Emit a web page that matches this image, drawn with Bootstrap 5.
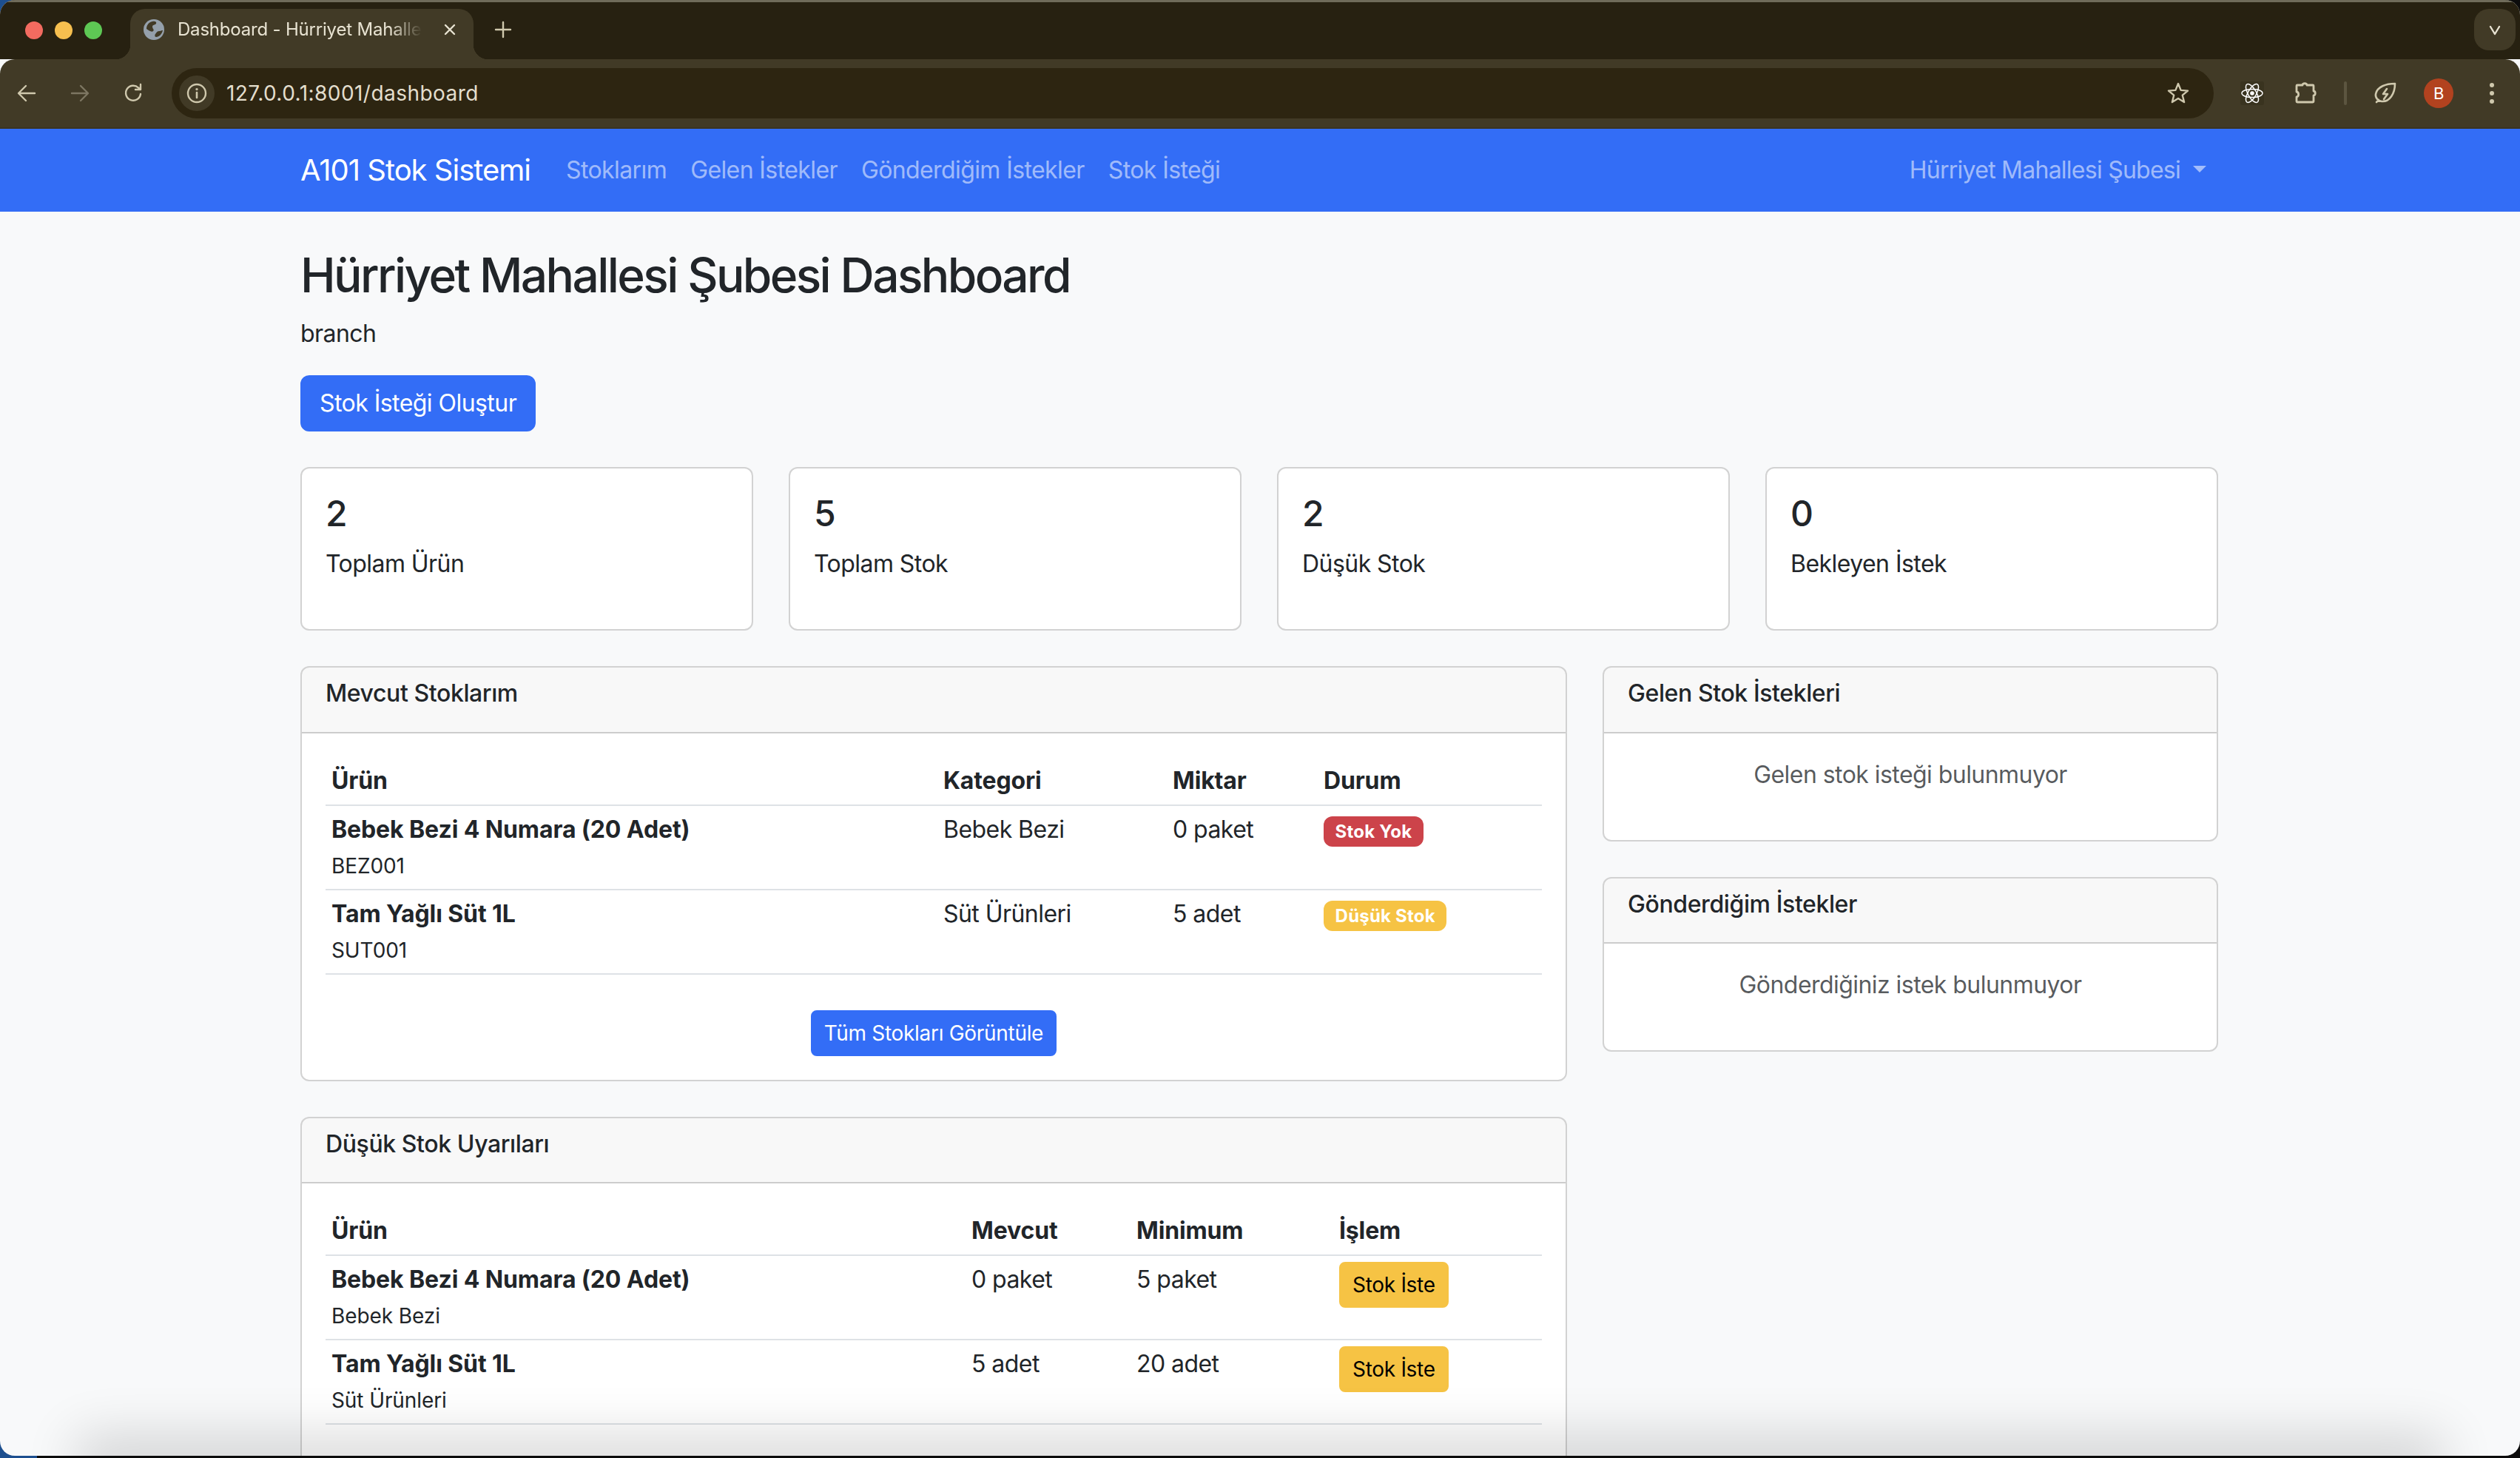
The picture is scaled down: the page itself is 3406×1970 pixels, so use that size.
<!DOCTYPE html>
<html lang="tr">
<head>
    <meta charset="UTF-8">
    <meta name="viewport" content="width=device-width, initial-scale=1.0">
    <title>Dashboard - Hürriyet Mahallesi Şubesi</title>
    <link href="https://cdn.jsdelivr.net/npm/bootstrap@5.3.0/dist/css/bootstrap.min.css" rel="stylesheet">
    <style>
        /* reference is a 2x capture, so everything rem-based is doubled */
        html { font-size: 32px; }
        :root {
            --bs-border-width: 2px;
            --bs-body-font-family: Inter, "Noto Sans", sans-serif;
            --bs-primary-rgb: 51, 109, 246;
            --bs-danger-rgb: 204, 67, 74;
            --bs-warning-rgb: 246, 195, 68;
        }
        body { height: 1970px; overflow: hidden; letter-spacing: -.55px; background: linear-gradient(90deg, #1d4f8f 0 50px, #0c0c0c 50px); }
        .container { max-width: 2640px; margin-left: 382px; }
        .btn-primary { --bs-btn-bg: #336df6; --bs-btn-border-color: #336df6; }
        .btn-warning { --bs-btn-bg: #f6c344; --bs-btn-border-color: #f6c344; }
        .btn-sm { letter-spacing: -.3px; }
        .app-window { position: relative; height: 1967px; overflow: hidden; border-radius: 20px; background: #f8f9fa; }
        .app-window::after { content: ""; position: absolute; left: 130px; right: 130px; bottom: -14px; height: 14px; box-shadow: 0 0 70px 26px rgba(0, 0, 0, .16); }

        /* browser frame */
        .tab-strip { height: 80px; background: #272111; border-top: 3px solid #6f6b5a; }
        .win-dots { gap: 16px; padding-left: 34px; margin-top: 26px; }
        .win-dot { width: 24px; height: 24px; border-radius: 50%; }
        .tab-item { position: relative; width: 464px; height: 68px; margin: 9px 0 0 38px; padding: 0 20px 12px 18px; background: #413a26; border-radius: 20px 20px 0 0; color: #e8e3d2; font-size: 24px; letter-spacing: -.2px; }
        .tab-item::before, .tab-item::after { content: ""; position: absolute; bottom: 0; width: 20px; height: 20px; }
        .tab-item::before { left: -20px; background: radial-gradient(circle at 0 0, transparent 20px, #413a26 20.5px); }
        .tab-item::after { right: -20px; background: radial-gradient(circle at 100% 0, transparent 20px, #413a26 20.5px); }
        .tab-title { width: 334px; margin: 0 24px 0 18px; white-space: nowrap; overflow: hidden; -webkit-mask-image: linear-gradient(90deg, #000 86%, transparent 99%); mask-image: linear-gradient(90deg, #000 86%, transparent 99%); }
        .tab-search { width: 56px; height: 56px; margin: 9px 6px 0 0; background: #413a26; border-radius: 20px; }
        .tool-bar { height: 94px; background: #413a26; border-radius: 20px 20px 0 0; border-bottom: 2px solid #3a3422; }
        .tool-slot { width: 72px; height: 72px; flex: none; }
        .omni-box { width: 2760px; height: 68px; margin: 0 16px; padding: 0 32px 0 10px; background: #2d2511; border-radius: 34px; color: #e3decd; font-size: 28px; letter-spacing: .45px; }
        .omni-info { width: 48px; height: 48px; margin-right: 16px; background: #413a26; border-radius: 50%; }
        .tool-sep { width: 4px; height: 32px; margin: 0 16px; background: #5c5540; border-radius: 2px; }
        .react-bg { width: 32px; height: 32px; background: #39331f; border-radius: 3px; }
        .user-dot { width: 40px; height: 40px; background: #b2421f; border-radius: 50%; color: #fff; font-size: 22px; }
        .chrome-ico { fill: none; stroke: #cfc8ad; stroke-width: 2.4; stroke-linecap: round; stroke-linejoin: round; }
        .chrome-ico.dim { stroke: #7d7662; }

        /* type tweaks, the capture was in a tighter system font */
        .navbar-brand { letter-spacing: -1px; }
        .navbar .nav-link { letter-spacing: -.6px; }
        .navbar .dropdown-toggle { letter-spacing: -.75px; }
        .navbar .dropdown-toggle::after { margin-left: 17px; }
        h2 { letter-spacing: -2.6px; }
        h6 { font-weight: 500; letter-spacing: -.4px; }
        th { letter-spacing: -.15px; }
        strong, small { letter-spacing: -.1px; }
        .badge { letter-spacing: .2px; }

        /* column widths read off the reference */
        .fixed-table { table-layout: fixed; }
        .stock-name { width: 827px; }
        .stock-cat { width: 310px; }
        .stock-qty { width: 204px; }
        .low-name { width: 865px; }
        .low-now { width: 223px; }
        .low-min { width: 274px; }
    </style>
</head>
<body>
    <div class="app-window">
        <!-- Browser frame -->
        <div class="tab-strip d-flex align-items-start">
            <div class="win-dots d-flex">
                <span class="win-dot" style="background:#f26b60"></span>
                <span class="win-dot" style="background:#f6bf4f"></span>
                <span class="win-dot" style="background:#5ec854"></span>
            </div>
            <div class="tab-item d-flex align-items-center">
                <svg width="28" height="28" viewBox="0 0 28 28">
                    <circle cx="14" cy="14" r="14" fill="#95a0ab"/>
                    <path d="M12 3c4-1 6 1 5 3s-5 1-5 4 3 4 1 6-6-1-9-3c0-5 3-9 8-10zM26 15c-1 5-5 9-9 9-2 0-2-3-1-4s2-4 5-4 3-1 5-1z" fill="#413a26"/>
                </svg>
                <span class="tab-title">Dashboard - Hürriyet Mahalle</span>
                <svg width="20" height="20" viewBox="0 0 20 20" class="chrome-ico"><path d="M4 4l12 12M16 4L4 16" style="stroke:#e8e3d2"/></svg>
            </div>
            <svg width="24" height="24" viewBox="0 0 24 24" class="chrome-ico" style="margin:25px 0 0 28px"><path d="M12 2v20M2 12h20"/></svg>
            <div class="tab-search ms-auto d-flex align-items-center justify-content-center">
                <svg width="20" height="20" viewBox="0 0 20 20" class="chrome-ico"><path d="M4 6l6 10 6-10" style="stroke:#e8e3d2"/></svg>
            </div>
        </div>
        <div class="tool-bar d-flex align-items-center">
            <div class="tool-slot d-flex align-items-center justify-content-center">
                <svg width="32" height="32" viewBox="0 0 32 32" class="chrome-ico"><path d="M27 16H6M15 6L5 16l10 10"/></svg>
            </div>
            <div class="tool-slot d-flex align-items-center justify-content-center">
                <svg width="32" height="32" viewBox="0 0 32 32" class="chrome-ico dim"><path d="M5 16h21M17 6l10 10-10 10"/></svg>
            </div>
            <div class="tool-slot d-flex align-items-center justify-content-center">
                <svg width="32" height="32" viewBox="0 0 32 32" class="chrome-ico"><path d="M26 17a10 10 0 1 1-3-8.500L26 11M26 4v7h-7"/></svg>
            </div>
            <div class="omni-box d-flex align-items-center">
                <span class="omni-info d-flex align-items-center justify-content-center">
                    <svg width="28" height="28" viewBox="0 0 28 28" class="chrome-ico"><circle cx="14" cy="14" r="12"/><path d="M14 13v7" stroke-width="2.6"/><circle cx="14" cy="8.6" r="1" style="stroke-width:1.4"/></svg>
                </span>
                <span>127.0.0.1:8001/dashboard</span>
                <svg width="32" height="32" viewBox="0 0 32 32" class="chrome-ico ms-auto"><path d="M16 3l3.600 8.900 9.400.7-7.200 6.100 2.300 9.300L16 23l-8.100 5 2.300-9.300L3 12.600l9.400-.7z"/></svg>
            </div>
            <div class="tool-slot d-flex align-items-center justify-content-center">
                <span class="react-bg d-flex align-items-center justify-content-center">
                    <svg width="32" height="32" viewBox="0 0 32 32" fill="none" stroke="#fff" stroke-width="1.5">
                        <ellipse cx="16" cy="16" rx="14" ry="5.600"/>
                        <ellipse cx="16" cy="16" rx="14" ry="5.600" transform="rotate(60 16 16)"/>
                        <ellipse cx="16" cy="16" rx="14" ry="5.600" transform="rotate(120 16 16)"/>
                        <circle cx="16" cy="16" r="2.800" fill="#fff" stroke="none"/>
                    </svg>
                </span>
            </div>
            <div class="tool-slot d-flex align-items-center justify-content-center">
                <svg width="32" height="32" viewBox="0 0 32 32" class="chrome-ico" style="stroke-width:2.800"><path d="M5 5h7c.3-3 5.700-3 6 0h8a1 1 0 0 1 1 1v7c3 .3 3 5.700 0 6v8a1 1 0 0 1-1 1H5a1 1 0 0 1-1-1v-6c3.500-.6 3.500-6.400 0-7V6a1 1 0 0 1 1-1z"/></svg>
            </div>
            <span class="tool-sep"></span>
            <div class="tool-slot d-flex align-items-center justify-content-center">
                <svg width="32" height="32" viewBox="0 0 32 32" class="chrome-ico" style="stroke-width:2.600"><path d="M29 3C17 3 5 7 3 17c-.8 5 3 9.500 8 10 11 1 18-11 18-24zM7 25l-3 3M18 10l-5 7h6l-5 7"/></svg>
            </div>
            <div class="tool-slot d-flex align-items-center justify-content-center">
                <span class="user-dot d-flex align-items-center justify-content-center">B</span>
            </div>
            <div class="tool-slot d-flex align-items-center justify-content-center">
                <svg width="12" height="32" viewBox="0 0 12 32" fill="#cfc8ad"><circle cx="6" cy="5" r="3"/><circle cx="6" cy="16" r="3"/><circle cx="6" cy="27" r="3"/></svg>
            </div>
        </div>

        <!-- Navbar -->
        <nav class="navbar navbar-expand-lg navbar-dark bg-primary">
            <div class="container">
                <a class="navbar-brand" href="#">A101 Stok Sistemi</a>
                <ul class="navbar-nav me-auto">
                    <li class="nav-item"><a class="nav-link" href="#">Stoklarım</a></li>
                    <li class="nav-item"><a class="nav-link" href="#">Gelen İstekler</a></li>
                    <li class="nav-item"><a class="nav-link" href="#">Gönderdiğim İstekler</a></li>
                    <li class="nav-item"><a class="nav-link" href="#">Stok İsteği</a></li>
                </ul>
                <ul class="navbar-nav">
                    <li class="nav-item dropdown"><a class="nav-link dropdown-toggle" href="#" role="button" data-bs-toggle="dropdown">Hürriyet Mahallesi Şubesi</a></li>
                </ul>
            </div>
        </nav>

        <!-- Main Content -->
        <main class="container mt-4">
            <h2>Hürriyet Mahallesi Şubesi Dashboard</h2>
            <p>branch</p>
            <a href="#" class="btn btn-primary mb-4">Stok İsteği Oluştur</a>

            <div class="row mb-4">
                <div class="col-md-3"><div class="card"><div class="card-body"><h4>2</h4><p>Toplam Ürün</p></div></div></div>
                <div class="col-md-3"><div class="card"><div class="card-body"><h4>5</h4><p>Toplam Stok</p></div></div></div>
                <div class="col-md-3"><div class="card"><div class="card-body"><h4>2</h4><p>Düşük Stok</p></div></div></div>
                <div class="col-md-3"><div class="card"><div class="card-body"><h4>0</h4><p>Bekleyen İstek</p></div></div></div>
            </div>

            <div class="row">
                <div class="col-md-8">
                    <div class="card mb-4">
                        <div class="card-header"><h6>Mevcut Stoklarım</h6></div>
                        <div class="card-body">
                            <table class="table table-sm fixed-table">
                                <thead>
                                    <tr><th class="stock-name">Ürün</th><th class="stock-cat">Kategori</th><th class="stock-qty">Miktar</th><th>Durum</th></tr>
                                </thead>
                                <tbody>
                                    <tr>
                                        <td><strong>Bebek Bezi 4 Numara (20 Adet)</strong><br><small>BEZ001</small></td>
                                        <td>Bebek Bezi</td>
                                        <td>0 paket</td>
                                        <td><span class="badge bg-danger">Stok Yok</span></td>
                                    </tr>
                                    <tr>
                                        <td><strong>Tam Yağlı Süt 1L</strong><br><small>SUT001</small></td>
                                        <td>Süt Ürünleri</td>
                                        <td>5 adet</td>
                                        <td><span class="badge bg-warning">Düşük Stok</span></td>
                                    </tr>
                                </tbody>
                            </table>
                            <div class="text-center mt-4">
                                <a href="#" class="btn btn-primary btn-sm">Tüm Stokları Görüntüle</a>
                            </div>
                        </div>
                    </div>

                    <div class="card mb-4">
                        <div class="card-header"><h6>Düşük Stok Uyarıları</h6></div>
                        <div class="card-body">
                            <table class="table table-sm fixed-table">
                                <thead>
                                    <tr><th class="low-name">Ürün</th><th class="low-now">Mevcut</th><th class="low-min">Minimum</th><th>İşlem</th></tr>
                                </thead>
                                <tbody>
                                    <tr>
                                        <td><strong>Bebek Bezi 4 Numara (20 Adet)</strong><br><small>Bebek Bezi</small></td>
                                        <td>0 paket</td>
                                        <td>5 paket</td>
                                        <td><a href="#" class="btn btn-warning btn-sm">Stok İste</a></td>
                                    </tr>
                                    <tr>
                                        <td><strong>Tam Yağlı Süt 1L</strong><br><small>Süt Ürünleri</small></td>
                                        <td>5 adet</td>
                                        <td>20 adet</td>
                                        <td><a href="#" class="btn btn-warning btn-sm">Stok İste</a></td>
                                    </tr>
                                </tbody>
                            </table>
                        </div>
                    </div>
                </div>

                <div class="col-md-4">
                    <div class="card mb-4">
                        <div class="card-header"><h6>Gelen Stok İstekleri</h6></div>
                        <div class="card-body"><p class="text-center text-body-secondary">Gelen stok isteği bulunmuyor</p></div>
                    </div>
                    <div class="card mb-4">
                        <div class="card-header"><h6>Gönderdiğim İstekler</h6></div>
                        <div class="card-body"><p class="text-center text-body-secondary">Gönderdiğiniz istek bulunmuyor</p></div>
                    </div>
                </div>
            </div>
        </main>
    </div>

    <script src="https://cdn.jsdelivr.net/npm/bootstrap@5.3.0/dist/js/bootstrap.bundle.min.js"></script>
</body>
</html>
